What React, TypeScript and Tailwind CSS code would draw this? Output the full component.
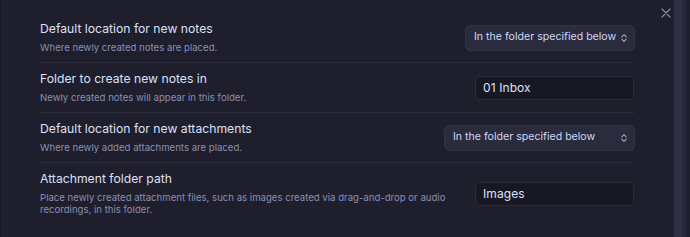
import React from 'react';

type Row = {
  title: string;
  desc: string;
  control: React.ReactNode;
};

const UpDown = () => (
  <svg width="8" height="10" viewBox="0 0 8 10" fill="none" className="shrink-0">
    <path d="M1.8 3.8 L4 1.6 L6.2 3.8" stroke="#9ea3bf" strokeWidth="1.1" strokeLinecap="round" strokeLinejoin="round" />
    <path d="M1.8 6.2 L4 8.4 L6.2 6.2" stroke="#9ea3bf" strokeWidth="1.1" strokeLinecap="round" strokeLinejoin="round" />
  </svg>
);

const Dropdown = ({ label, width }: { label: string; width: string }) => (
  <div
    className={`${width} h-[24px] flex items-center justify-between pl-[8px] pr-[6px] rounded-[5px] bg-[#2b2b3e] shadow-[0_0_0_1px_#33334a] text-[10.6px] text-[#cfd6f5] whitespace-nowrap`}
  >
    <span className="leading-none">{label}</span>
    <UpDown />
  </div>
);

const TextInput = ({ value }: { value: string }) => (
  <div className="w-[159px] h-[24px] flex items-center px-[7px] rounded-[5px] bg-[#181824] border border-[#2c2c3f] text-[12px] tracking-[0.1px] text-[#dde2f7]">
    {value}
  </div>
);

const rows: Row[] = [
  {
    title: 'Default location for new notes',
    desc: 'Where newly created notes are placed.',
    control: <Dropdown label="In the folder specified below" width="w-[168px]" />,
  },
  {
    title: 'Folder to create new notes in',
    desc: 'Newly created notes will appear in this folder.',
    control: <TextInput value="01 Inbox" />,
  },
  {
    title: 'Default location for new attachments',
    desc: 'Where newly added attachments are placed.',
    control: <Dropdown label="In the folder specified below" width="w-[189px]" />,
  },
  {
    title: 'Attachment folder path',
    desc: 'Place newly created attachment files, such as images created via drag-and-drop or audio recordings, in this folder.',
    control: <TextInput value="Images" />,
  },
];

export default function App() {
  return (
    <div
      className="w-[690px] h-[237px] flex bg-[#1e1e2d] overflow-hidden"
      style={{ fontFamily: 'Inter, "Noto Sans", sans-serif' }}
    >
      {/* left edge */}
      <div className="w-[3px] bg-[#1a1a27] border-r border-[#26263a]" />

      {/* settings list */}
      <div className="flex-1 pl-[37px] pt-[13px]">
        <div className="w-[594px]">
          {rows.map((row, i) => (
            <div
              key={i}
              className={`flex items-center py-[8px] ${i > 0 ? 'border-t border-[#2c2c3f]' : ''}`}
            >
              <div className="flex-1 mr-[24px]">
                <div className="text-[12.2px] leading-[16px] text-[#dce1f8]">{row.title}</div>
                <div className="mt-[5px] max-w-[412px] text-[9.6px] leading-[12px] text-[#8a90b1]">{row.desc}</div>
              </div>
              {row.control}
            </div>
          ))}
        </div>
      </div>

      {/* close button */}
      <div className="w-[16px] ml-[4px] pt-[8px] flex justify-center">
        <svg width="10" height="10" viewBox="0 0 10 10" fill="none">
          <path d="M1 1 L9 9 M9 1 L1 9" stroke="#8c91ad" strokeWidth="1.1" strokeLinecap="round" />
        </svg>
      </div>

      {/* scrollbar */}
      <div className="flex">
        <div className="w-[8px] bg-[#2f2f44]" />
        <div className="w-[4px] bg-[#27273a]" />
        <div className="w-[4px] bg-[#1f1f2f]" />
      </div>
    </div>
  );
}
